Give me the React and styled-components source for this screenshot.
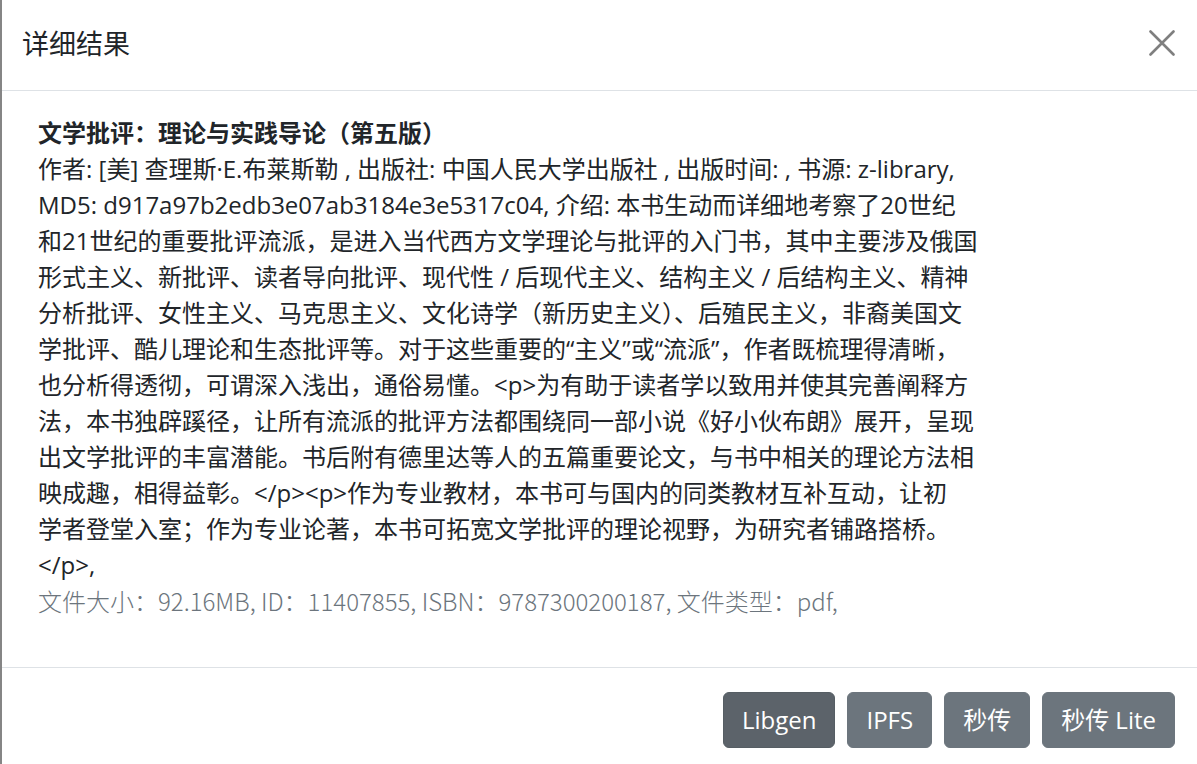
import React from "react";
import styled, { createGlobalStyle } from "styled-components";

const Global = createGlobalStyle`
  html, body { margin: 0; padding: 0; background: #ffffff; overflow: hidden; }
  * { box-sizing: border-box; }
`;

const Modal = styled.div`
  width: 1197px;
  height: 764px;
  border-left: 2px solid #858585;
  background: #fff;
  display: flex;
  flex-direction: column;
  font-family: "Open Sans", "Noto Sans CJK SC", sans-serif;
  color: #212529;
`;

const Header = styled.div`
  height: 91px;
  flex: none;
  display: flex;
  align-items: center;
  justify-content: space-between;
  padding: 0 22px 4px 20px;
  border-bottom: 1px solid #dee2e6;
`;

const Title = styled.h5`
  margin: 0;
  font-family: "Noto Sans CJK SC", sans-serif;
  font-size: 27px;
  font-weight: 400;
  line-height: 1.2;
  color: #212529;
`;

const CloseButton = styled.button`
  border: 0;
  background: transparent;
  padding: 0;
  width: 26px;
  height: 26px;
  display: flex;
  align-items: center;
  justify-content: center;
  cursor: pointer;
`;

const Body = styled.div`
  flex: 1;
  padding: 24px 0 0 36px;
`;

const BookTitle = styled.div`
  font-size: 24px;
  line-height: 36px;
  font-weight: 700;
  font-family: "Open Sans", "Noto Sans CJK SC", sans-serif;
  white-space: nowrap;
`;

const Text = styled.div`
  font-size: 24px;
  line-height: 36px;
  white-space: nowrap;
  letter-spacing: ${(p) => p.$tight || 0}px;
`;

const Muted = styled.div`
  font-family: "Noto Sans CJK SC", sans-serif;
  font-weight: 300;
  font-size: 24px;
  line-height: 36px;
  color: #6c757d;
  white-space: nowrap;
`;

const Footer = styled.div`
  flex: none;
  height: 97px;
  border-top: 1px solid #dee2e6;
  display: flex;
  justify-content: flex-end;
  align-items: flex-start;
  gap: 12px;
  padding: 24px 22px 0 0;
`;

const Button = styled.button`
  height: 56px;
  padding: 0 18px;
  border: 1px solid ${(p) => (p.$active ? "#565e64" : "#6c757d")};
  border-radius: 6px;
  background: ${(p) => (p.$active ? "#5c636a" : "#6c757d")};
  color: #fff;
  font-family: "Open Sans", "Noto Sans CJK SC", sans-serif;
  font-size: 24px;
  line-height: 36px;
  cursor: pointer;
`;

const lines = [
  "作者: [美] 查理斯·E.布莱斯勒 , 出版社: 中国人民大学出版社 , 出版时间: , 书源: z-library,",
  "MD5: d917a97b2edb3e07ab3184e3e5317c04, 介绍: 本书生动而详细地考察了20世纪",
  "和21世纪的重要批评流派，是进入当代西方文学理论与批评的入门书，其中主要涉及俄国",
  "形式主义、新批评、读者导向批评、现代性 / 后现代主义、结构主义 / 后结构主义、精神",
  "分析批评、女性主义、马克思主义、文化诗学（新历史主义）、后殖民主义，非裔美国文",
  "学批评、酷儿理论和生态批评等。对于这些重要的“主义”或“流派”，作者既梳理得清晰，",
  "也分析得透彻，可谓深入浅出，通俗易懂。<p>为有助于读者学以致用并使其完善阐释方",
  "法，本书独辟蹊径，让所有流派的批评方法都围绕同一部小说《好小伙布朗》展开，呈现",
  "出文学批评的丰富潜能。书后附有德里达等人的五篇重要论文，与书中相关的理论方法相",
  "映成趣，相得益彰。</p><p>作为专业教材，本书可与国内的同类教材互补互动，让初",
  "学者登堂入室；作为专业论著，本书可拓宽文学批评的理论视野，为研究者铺路搭桥。",
  "</p>,",
];

export default function App() {
  return (
    <>
      <Global />
      <Modal>
        <Header>
          <Title>详细结果</Title>
          <CloseButton aria-label="Close">
            <svg width="26" height="26" viewBox="0 0 26 26">
              <path
                d="M1.5 1.5 L24.5 24.5 M24.5 1.5 L1.5 24.5"
                stroke="#7f7f7f"
                strokeWidth="2.6"
                strokeLinecap="round"
              />
            </svg>
          </CloseButton>
        </Header>
        <Body>
          <BookTitle>文学批评：理论与实践导论（第五版）</BookTitle>
          {lines.map((l, i) => (
            <Text key={i}>{l}</Text>
          ))}
          <Muted>文件大小：92.16MB, ID：11407855, ISBN：9787300200187, 文件类型：pdf,</Muted>
        </Body>
        <Footer>
          <Button $active>Libgen</Button>
          <Button>IPFS</Button>
          <Button>秒传</Button>
          <Button>秒传 Lite</Button>
        </Footer>
      </Modal>
    </>
  );
}
